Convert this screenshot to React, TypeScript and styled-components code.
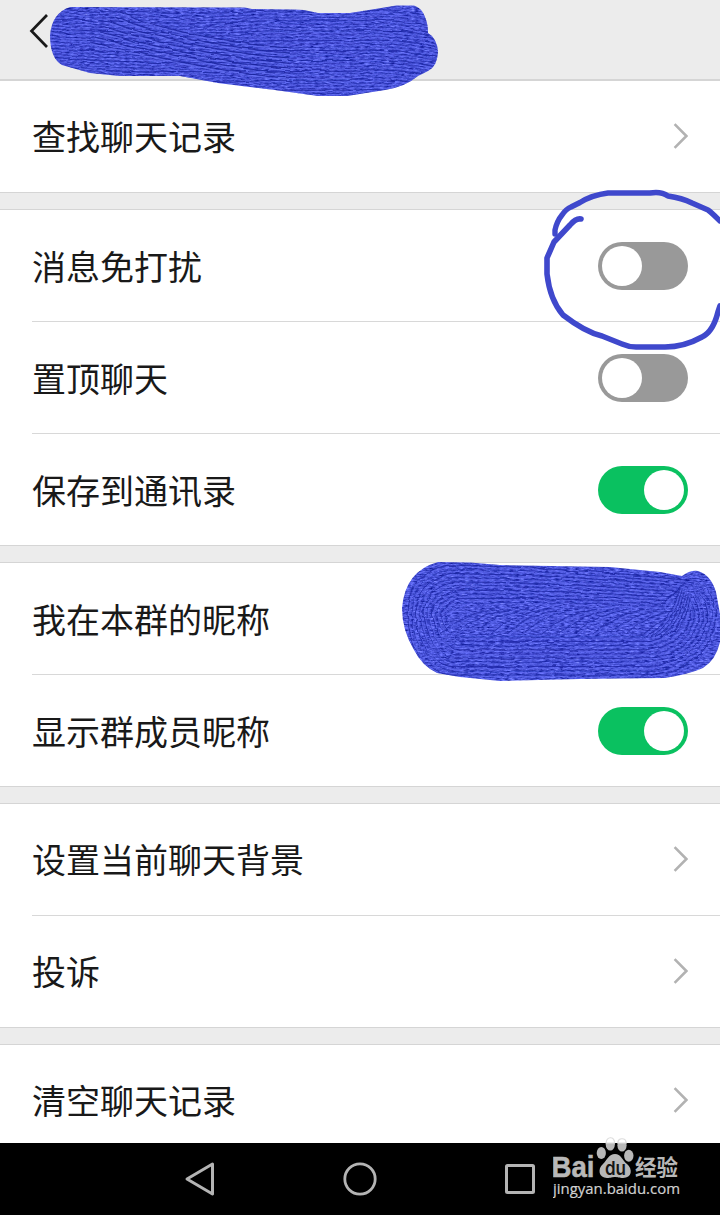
import React from "react";
import styled, { createGlobalStyle } from "styled-components";

const GlobalStyle = createGlobalStyle`
  * { box-sizing: border-box; }
  body { margin: 0; background: #fff; }
`;

const Screen = styled.div`
  position: relative;
  display: flex;
  flex-direction: column;
  width: 720px;
  height: 1215px;
  overflow: hidden;
  background: #ececec;
  color: #191919;
  font-family: "Noto Sans CJK SC", sans-serif;
`;

const Header = styled.header`
  flex: none;
  height: 81px;
  padding: 14px 0 0 29px;
  border-bottom: 2px solid #d5d5d5;
`;

const Settings = styled.main`
  flex: 1;
  min-height: 0;
  overflow: hidden;
  display: flex;
  flex-direction: column;
  gap: 16px;
`;

const Group = styled.section<{ $first?: boolean }>`
  flex: none;
  background: #fff;
  border-top: ${(p) => (p.$first ? "0" : "1px solid #d5d5d5")};
  border-bottom: 1px solid #d5d5d5;
`;

const Row = styled.div`
  height: 111px;
  margin-left: 32px;
  padding: 0 32px 1px 0;
  display: flex;
  align-items: center;
  justify-content: space-between;
  & + & {
    height: 112px;
    border-top: 1px solid #d8d8d8;
  }
`;

const Label = styled.span<{ $low?: boolean }>`
  margin-top: ${(p) => (p.$low ? "2px" : "0")};
  font-size: 34px;
  line-height: 50px;
  white-space: nowrap;
`;

const Toggle = styled.span<{ $on?: boolean }>`
  display: flex;
  justify-content: ${(p) => (p.$on ? "flex-end" : "flex-start")};
  width: 90px;
  height: 48px;
  margin-top: 2px;
  padding: 4px;
  border-radius: 24px;
  background: ${(p) => (p.$on ? "#0ac160" : "#999")};
`;

const Knob = styled.span`
  width: 40px;
  height: 40px;
  border-radius: 50%;
  background: #fff;
`;

const NavBar = styled.nav`
  flex: none;
  height: 72px;
  background: #000;
  display: flex;
  padding-left: 120px;
`;

const NavKey = styled.span`
  width: 160px;
  display: flex;
  align-items: center;
  justify-content: center;
`;

const Ink = styled.svg`
  position: absolute;
  left: 0;
  top: 0;
  pointer-events: none;
`;

const Chevron = () => (
  <svg width="16" height="28" viewBox="0 0 16 28" fill="none" stroke="#b2b2b2" strokeWidth="2.6">
    <path d="M2.6 2.2L14.4 14L2.6 25.8" />
  </svg>
);

const Switch = ({ on }: { on?: boolean }) => (
  <Toggle $on={on}>
    <Knob />
  </Toggle>
);

const HEADER_BLOB =
  "M70 7L245 7.5L252 9L295 9.5L304 10L318 13L350 13L375 9L396 5.5L414 5.5Q422 8 425 17Q428 24 428 33Q437 38 438 52Q437 67 428 71L418 76Q405 87 385 90L347 96L318 96L275 90L218 83L180 76L120 76L90 73L62 65Q50 58 50 35Q52 13 70 7Z";
const NAME_BLOB =
  "M438 562L470 562.5L500 565L610 567L660 572L682 576Q690 570 698 571Q711 575 716 592L720 614L720 642Q716 660 703 668Q690 674 665 678L580 679L500 681L460 677L437 673Q422 666 414 650Q402 630 402 608Q405 571 438 562Z";

const headerStrokes = Array.from({ length: 26 }, (_, i) => {
  const y = 9 + i * 3.3;
  const bend = i < 12 ? 0 : (i - 12) * 0.5;
  return `M52 ${y - bend}Q100 ${y + 3} 160 ${y + 4}T270 ${y + 2}L350 ${y + 2}Q400 ${y - 1} 440 ${y + 9}`;
});
const headerSweeps = Array.from({ length: 7 }, (_, i) => {
  const y = 12 + i * 5;
  return `M${120 - i * 5} ${y}Q150 ${y + 14} 202 ${y + 24}T290 ${y + 36}`;
});
const nameLoops = Array.from({ length: 10 }, (_, i) => {
  const d = i * 4.2;
  return `M${448 + d / 3} ${565 + d}Q${407 + d} ${573 + d} ${407 + d} 614Q${412 + d} ${668 - d} ${448 + d / 3} ${675 - d}L650 ${675 - d}Q${714 - d} ${668 - d} ${716 - d} 612Q${706 - d} ${568 + d * 0.5} ${686 - d * 0.6} ${580 + d * 0.7}Q560 ${567 + d * 0.9} ${448 + d / 3} ${565 + d}`;
});
const nameSweeps = Array.from({ length: 13 }, (_, i) => {
  const x = 440 + i * 17;
  return `M${x} ${634 - (i % 3)}Q${x + 20} 614 ${x + 55} 609`;
});
const nameHooks = Array.from({ length: 6 }, (_, i) => `M${646 + i * 5} 637Q${672 + i * 3} 622 ${680 + i * 2} ${588 + i * 2}`);

const Marks = () => (
  <Ink width="720" height="700" viewBox="0 0 720 700" fill="none">
    <defs>
      <clipPath id="headerClip">
        <path d={HEADER_BLOB} />
      </clipPath>
      <clipPath id="nameClip">
        <path d={NAME_BLOB} />
      </clipPath>
      <filter id="grain" x="0" y="0" width="100%" height="100%" colorInterpolationFilters="sRGB">
        <feTurbulence type="fractalNoise" baseFrequency="0.2 0.7" numOctaves="3" seed="7" />
        <feColorMatrix values="0.5 0.35 0 0 -0.14  0.5 0.35 0 0 -0.10  0.6 0.35 0 0 0.37  0 0 0 0 1" />
      </filter>
      <filter id="rough" x="-5%" y="-5%" width="110%" height="110%">
        <feTurbulence type="fractalNoise" baseFrequency="0.05 0.12" numOctaves="2" seed="3" result="n" />
        <feDisplacementMap in="SourceGraphic" in2="n" scale="4" xChannelSelector="R" yChannelSelector="G" />
      </filter>
    </defs>
    <g clipPath="url(#headerClip)">
      <rect x="48" y="4" width="392" height="94" fill="#3d46cb" filter="url(#grain)" />
      <g filter="url(#rough)" strokeWidth="1">
        {headerStrokes.map((d, i) => (
          <React.Fragment key={i}>
            <path d={d} stroke="#1c26a4" opacity={i % 3 ? 0.45 : 0.8} />
            <path d={d} stroke="#5f6af0" opacity={0.55} transform="translate(0 1.5)" />
          </React.Fragment>
        ))}
        {headerSweeps.map((d, i) => (
          <React.Fragment key={i}>
            <path d={d} stroke="#1a239c" opacity={0.85} />
            <path d={d} stroke="#6570f2" opacity={0.8} transform="translate(0 1.6)" />
          </React.Fragment>
        ))}
      </g>
    </g>
    <g clipPath="url(#nameClip)">
      <rect x="400" y="560" width="320" height="124" fill="#3d46cb" filter="url(#grain)" />
      <g filter="url(#rough)" strokeWidth="1">
        {nameLoops.map((d, i) => (
          <React.Fragment key={i}>
            <path d={d} stroke="#1c26a4" opacity={i % 2 ? 0.55 : 0.8} />
            <path d={d} stroke="#5f6af0" opacity={0.7} transform="translate(1.5 1.7)" />
          </React.Fragment>
        ))}
        {[...nameSweeps, ...nameHooks].map((d, i) => (
          <React.Fragment key={i}>
            <path d={d} stroke="#1f29a6" opacity={0.75} />
            <path d={d} stroke="#5f6af0" opacity={0.6} transform="translate(1.5 1.5)" />
          </React.Fragment>
        ))}
      </g>
    </g>
    <path
      d="M555 234L555 230Q557 221 562 215Q566 209 571 207L580 202.5Q592 195 608 193L650 193Q661 191 668 196Q682 198 692 203L708 210Q712 213 720 221"
      stroke="#3f48cc"
      strokeWidth="5.4"
      strokeLinecap="round"
      strokeLinejoin="round"
    />
    <path
      d="M581 219Q576 218 570 225L554 242L547 258L547 274Q550 300 563 315Q585 332 602 336L622 344Q630 347.5 638 347L665 347Q684 347 702 337Q713 332 718 312L720 306"
      stroke="#3f48cc"
      strokeWidth="5.6"
      strokeLinecap="round"
      strokeLinejoin="round"
    />
  </Ink>
);

const Watermark = styled.div`
  position: absolute;
  left: 553px;
  top: 1136px;
  width: 130px;
  height: 64px;
  svg { display: block; }
`;

const Logo = () => (
  <Watermark>
    <svg width="130" height="64" viewBox="0 0 130 64">
      <g fill="#b8b8b8">
        <ellipse cx="48.3" cy="17" rx="4.6" ry="6.1" />
        <ellipse cx="57.3" cy="8.2" rx="4.6" ry="6.4" />
        <ellipse cx="69" cy="9.2" rx="4.6" ry="6.4" />
        <ellipse cx="75.8" cy="19.7" rx="4.7" ry="6" />
        <path d="M62 18C56 18 54 24 50 28C44 33 46 42 54 42C58 42 59 41 62 41C65 41 66 42 70 42C79 42 80 33 74 28C69 24 68 18 62 18Z" />
      </g>
      <path fill="#fff" stroke="#dedede" strokeWidth="1.2" d="M53.1 7C53.1 0 61.5 0 61.5 7ZM64.8 7C64.8 1.3 73.2 1.3 73.2 7Z" />
      <text x="-1.5" y="41" fill="#b8b8b8" stroke="#b8b8b8" strokeWidth="0.5" fontFamily="Liberation Sans" fontWeight="700" fontSize="29" textLength="43" lengthAdjust="spacingAndGlyphs">Bai</text>
      <text x="52" y="38.5" fill="#151515" fontFamily="Inter, sans-serif" fontWeight="600" fontSize="19" textLength="21" lengthAdjust="spacingAndGlyphs">du</text>
      <text x="82" y="39" fill="#b8b8b8" fontFamily="Noto Sans CJK SC" fontWeight="700" fontSize="22" textLength="43" lengthAdjust="spacingAndGlyphs">经验</text>
      <text x="0" y="58" fill="#d0d0d0" stroke="#d0d0d0" strokeWidth="0.2" fontFamily="Open Sans" fontSize="15" textLength="127" lengthAdjust="spacingAndGlyphs">jingyan.baidu.com</text>
    </svg>
  </Watermark>
);

export default function App() {
  return (
    <Screen>
      <GlobalStyle />
      <Header>
        <svg width="20" height="35" viewBox="0 0 20 35" fill="none" stroke="#191919" strokeWidth="2.7">
          <path d="M18 1L2.5 17L18 33" />
        </svg>
      </Header>
      <Settings>
        <Group $first>
          <Row><Label>查找聊天记录</Label><Chevron /></Row>
        </Group>
        <Group>
          <Row><Label $low>消息免打扰</Label><Switch /></Row>
          <Row><Label $low>置顶聊天</Label><Switch /></Row>
          <Row><Label $low>保存到通讯录</Label><Switch on /></Row>
        </Group>
        <Group>
          <Row><Label $low>我在本群的昵称</Label></Row>
          <Row><Label $low>显示群成员昵称</Label><Switch on /></Row>
        </Group>
        <Group>
          <Row><Label>设置当前聊天背景</Label><Chevron /></Row>
          <Row><Label>投诉</Label><Chevron /></Row>
        </Group>
        <Group>
          <Row><Label>清空聊天记录</Label><Chevron /></Row>
        </Group>
      </Settings>
      <NavBar>
        <NavKey>
          <svg width="32" height="36" viewBox="0 0 32 36" fill="none" stroke="#b4b4b4" strokeWidth="3" strokeLinejoin="round">
            <path d="M28.5 3L3 18L28.5 33Z" />
          </svg>
        </NavKey>
        <NavKey>
          <svg width="36" height="36" viewBox="0 0 36 36" fill="none" stroke="#b4b4b4" strokeWidth="2.8">
            <circle cx="18" cy="18" r="15.2" />
          </svg>
        </NavKey>
        <NavKey>
          <svg width="32" height="32" viewBox="0 0 32 32" fill="none" stroke="#b4b4b4" strokeWidth="3">
            <rect x="2.5" y="2.5" width="27" height="27" rx="1" />
          </svg>
        </NavKey>
      </NavBar>
      <Marks />
      <Logo />
    </Screen>
  );
}
